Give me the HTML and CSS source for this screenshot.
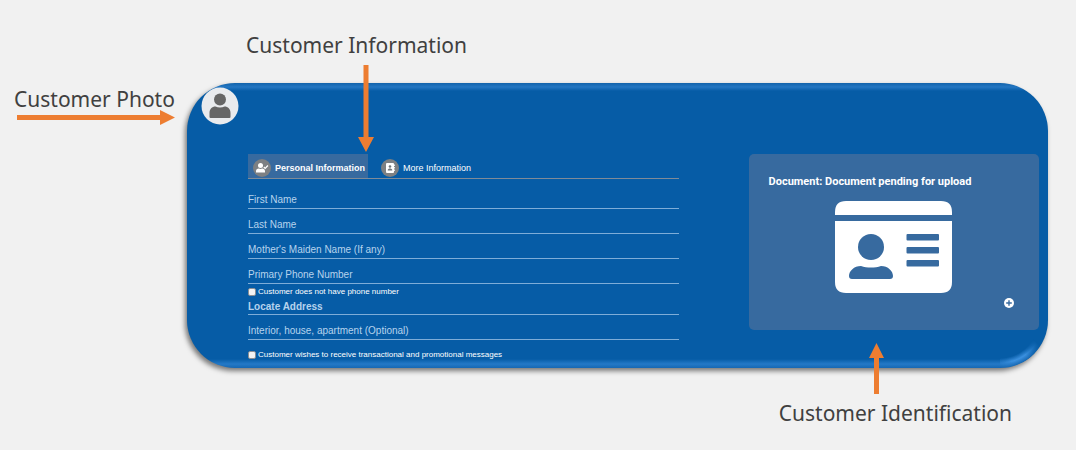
FILE: index.html
```html
<!DOCTYPE html>
<html lang="en">
<head>
<meta charset="utf-8">
<title>Customer Information</title>
<link rel="stylesheet" href="styles.css">
</head>
<body>
<main class="guide">
  <div class="callout callout-info">
    Customer Information
    <svg class="arrow arrow-down" width="16" height="87" viewBox="0 0 16 87" aria-hidden="true"><path d="M5.500 0h5v72H16L8 87 0 72h5.500z"/></svg>
  </div>

  <div class="callout callout-photo">
    Customer Photo
    <svg class="arrow-right" width="158" height="15" viewBox="0 0 158 15" aria-hidden="true"><path d="M0 5h143V0l15 7.500-15 7.500V10H0z"/></svg>
  </div>

  <section class="card">
    <svg class="avatar" viewBox="0 0 38 38" role="img" aria-label="Customer photo"><circle cx="19" cy="19" r="18.500" fill="#e9ebee"/><circle cx="19" cy="12.500" r="6" fill="#666"/><path d="M8.500 30v-4c0-4 2.500-6.500 6-6.500 2.500 1.300 6.500 1.300 9 0 3.500 0 6 2.500 6 6.500v4q0 1-1 1h-19q-1 0-1-1z" fill="#666"/></svg>

    <form class="form">
      <div class="tabs" role="tablist">
        <button class="tab tab-active" type="button" role="tab" aria-selected="true">
          <svg class="tab-icon" viewBox="0 0 18 18" aria-hidden="true"><circle cx="9" cy="9" r="9" fill="#7d8083"/><g fill="#fff"><circle cx="7.500" cy="6.500" r="2.500"/><path d="M3 13.500v-1.200C3 10.500 4.200 9.500 5.800 9.500c1 .5 2.400.5 3.400 0 1.600 0 2.800 1 2.800 2.800v1.200z"/></g><path d="M10.800 8l1.400 1.400 2.700-2.900" fill="none" stroke="#fff" stroke-width="1.300"/></svg>
          Personal Information
        </button>
        <button class="tab" type="button" role="tab" aria-selected="false">
          <svg class="tab-icon" viewBox="0 0 18 18" aria-hidden="true"><circle cx="9" cy="9" r="9" fill="#7d8083"/><rect x="5" y="4" width="8" height="10" rx="1" fill="#fff"/><path d="M13.300 5.500v1.500M13.300 8v1.500M13.300 10.500V12" stroke="#fff"/><circle cx="9" cy="7.500" r="1.300" fill="#70757a"/><path d="M6.700 11.500c0-2.600 4.600-2.600 4.600 0z" fill="#70757a"/></svg>
          More Information
        </button>
      </div>
      <div class="fields">
        <input class="field" type="text" placeholder="First Name" aria-label="First Name">
        <input class="field" type="text" placeholder="Last Name" aria-label="Last Name">
        <input class="field" type="text" placeholder="Mother's Maiden Name (If any)" aria-label="Mother's Maiden Name (If any)">
        <input class="field" type="text" placeholder="Primary Phone Number" aria-label="Primary Phone Number">
        <label class="check"><input class="box" type="checkbox">Customer does not have phone number</label>
        <input class="field field-address" type="text" placeholder="Locate Address" aria-label="Locate Address">
        <input class="field" type="text" placeholder="Interior, house, apartment (Optional)" aria-label="Interior, house, apartment (Optional)">
        <label class="check check-last"><input class="box" type="checkbox">Customer wishes to receive transactional and promotional messages</label>
      </div>
    </form>

    <section class="document">
      <h2 class="document-title">Document: Document pending for upload</h2>
      <svg class="id-card" width="117" height="92" viewBox="0 0 117 92" aria-hidden="true"><path d="M0 14V11Q0 0 11 0h95q11 0 11 11v3zM0 20h117v61q0 11-11 11H11Q0 92 0 81z" fill="#fff"/><g fill="#376a9f"><circle cx="36" cy="46" r="13"/><path d="M14 75c0-5 5-10 12-10 6 2 14 2 20 0 7 0 12 5 12 10q0 3-3 3H17q-3 0-3-3z"/><rect x="71.500" y="33" width="32.500" height="6.500" rx="1"/><rect x="71.500" y="46" width="32.500" height="6.500" rx="1"/><rect x="71.500" y="59" width="32.500" height="6.500" rx="1"/></g></svg>
      <button class="add" type="button" aria-label="Add document"><svg width="10" height="10" viewBox="0 0 10 10"><circle cx="5" cy="5" r="5" fill="#fff"/><path d="M5 2.200v5.600M2.200 5h5.600" stroke="#376a9f" stroke-width="1.400"/></svg></button>
    </section>
  </section>

  <div class="callout callout-id">
    Customer Identification
    <svg class="arrow arrow-up" width="15" height="51" viewBox="0 0 15 51" aria-hidden="true"><path d="M5 51h5V15h5L7.500 0 0 15h5z"/></svg>
  </div>
</main>
</body>
</html>
```
FILE: styles.css
```css
* { box-sizing: border-box; }

body {
  margin: 0;
  background: #f1f1f1;
  font-family: "Liberation Sans", Arial, sans-serif;
}

.guide {
  display: grid;
  grid-template-columns: 187px 1fr;
  padding: 30px 28px 20px 0;
}

.callout {
  position: relative;
  color: #404040;
  font-family: "Noto Sans", sans-serif;
  font-size: 21px;
  line-height: 30px;
  white-space: nowrap;
}

.callout svg { fill: #ed7d31; }

.callout-info {
  grid-column: 2;
  justify-self: start;
  margin: 0 0 23px 59px;
}

.callout-photo { padding: 1px 0 0 14px; }

.callout-id {
  grid-column: 2;
  justify-self: end;
  margin: 30px 36px 0 0;
}

.arrow { position: absolute; z-index: 1; }
.arrow-down { left: 112px; top: 35px; }
.arrow-up { left: 90px; bottom: 34px; }

.arrow-right {
  display: block;
  margin: -4px 0 0 3px;
}

.card {
  position: relative;
  display: grid;
  grid-template-columns: 47px minmax(0, 430fr) 70px minmax(0, 290fr);
  align-items: start;
  padding: 4px 9px 6px 14px;
  border-radius: 48px;
  background:
    linear-gradient(#1263ab, #2376c2 4px, #065ca6 8px) top / 100% 8px no-repeat,
    linear-gradient(#065ca6, #2479c7 5px, #1768b3 9px) bottom / 100% 9px no-repeat,
    #065ca6;
  box-shadow: -2px 3px 5px rgba(0, 0, 0, 0.5);
}

.card::after {
  content: "";
  position: absolute;
  right: 0;
  bottom: 0;
  width: 48px;
  height: 48px;
  border-bottom-right-radius: 48px;
  background: radial-gradient(circle at 0 0, transparent 38px, #3b90df 43px, #1768b3 48px);
  mask-image: linear-gradient(45deg, transparent, #000 20%, #000 40%, transparent 65%);
  pointer-events: none;
}

.avatar {
  width: 38px;
  height: 38px;
}

.form { margin-top: 67px; }

.tabs {
  display: flex;
  gap: 8px;
  border-bottom: 1px solid #7f8b98;
}

.tab {
  display: flex;
  align-items: center;
  gap: 4px;
  height: 24px;
  padding: 3px 3px 0 5px;
  border: 0;
  background: none;
  color: #fff;
  font: 9px "Liberation Sans", Arial, sans-serif;
  white-space: nowrap;
}

.tab-active {
  background: #376a9f;
  font-weight: bold;
}

.tab-icon { width: 18px; height: 18px; }

.fields {
  display: flex;
  flex-direction: column;
  padding-top: 5px;
}

.field {
  width: 100%;
  height: 25px;
  padding: 7px 0 0;
  border: 0;
  border-bottom: 1px solid #7eadd8;
  border-radius: 0;
  background: none;
  color: #fff;
  font: 10px "Liberation Sans", Arial, sans-serif;
}

.field::placeholder { color: #b6d3ed; opacity: 1; }

.field-address {
  height: 16px;
  padding: 0;
  font-weight: bold;
}

.check {
  display: flex;
  align-items: center;
  gap: 2px;
  height: 15px;
  color: #fff;
  font-size: 8px;
  white-space: nowrap;
}

.check-last { margin-top: 7px; }

.box {
  appearance: none;
  width: 8px;
  height: 8px;
  margin: 0;
  border: 1px solid #8b8f94;
  border-radius: 2px;
  background: #f3f3f3;
}

.document {
  display: flex;
  grid-column: 4;
  flex-direction: column;
  margin-top: 67px;
  padding: 20px;
  border-radius: 5px;
  background: #376a9f;
}

.document-title {
  margin: 0 0 11px;
  color: #fff;
  font-family: Roboto, Arial, sans-serif;
  font-size: 11px;
  line-height: 16px;
}

.id-card { align-self: center; }

.add {
  display: flex;
  align-self: flex-end;
  margin: 5px 5px 2px;
  padding: 0;
  border: 0;
  background: none;
}
```
